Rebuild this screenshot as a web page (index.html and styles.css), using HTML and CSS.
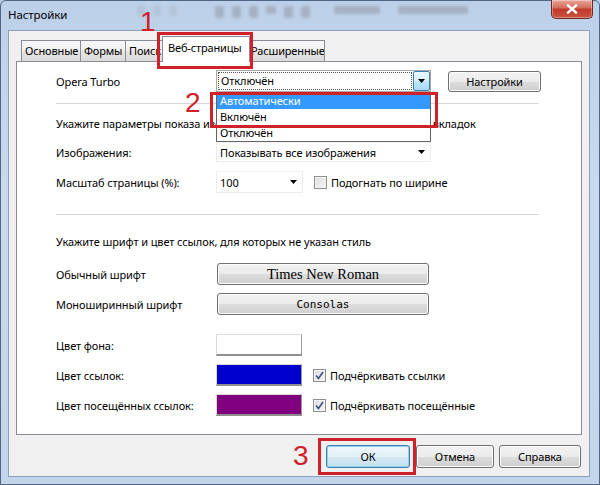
FILE: index.html
```html
<!DOCTYPE html>
<html lang="ru">
<head>
<meta charset="utf-8">
<title>Настройки</title>
<link rel="stylesheet" href="styles.css">
</head>
<body>
<div class="window">
  <div class="titlebar">
    <span class="title">Настройки</span>
    <div class="glass">
      <span class="g g1"></span><span class="g g2"></span><span class="g g3"></span><span class="g g4"></span>
      <span class="g g5"></span><span class="g g6"></span><span class="g g7"></span><span class="g g8"></span>
      <span class="g g9"></span><span class="g g10"></span><span class="g g11"></span>
    </div>
    <div class="close">
      <svg width="12" height="10" viewBox="0 0 12 10"><path d="M2 1.5 L10 8.5 M10 1.5 L2 8.5" stroke="#fff" stroke-width="2.4" stroke-linecap="square"/></svg>
    </div>
  </div>
  <div class="frame">
    <div class="client">
      <div class="tabs">
        <div class="tab t1">Основные</div>
        <div class="tab t2">Формы</div>
        <div class="tab t3">Поиск</div>
        <div class="tab sel">Веб-страницы</div>
        <div class="tab t5">Расширенные</div>
      </div>
      <div class="panel">
        <div class="row r-turbo">
          <span class="label">Opera Turbo</span>
          <div class="combo open">
            <span class="focus">Отключён</span>
            <span class="drop"><svg width="7" height="4" viewBox="0 0 7 4"><path d="M0 0 H7 L3.5 4 Z" fill="#000"/></svg></span>
            <div class="list">
              <div class="item hi">Автоматически</div>
              <div class="item">Включён</div>
              <div class="item">Отключён</div>
            </div>
          </div>
          <button class="btn b-settings">Настройки</button>
        </div>
        <div class="sep s1"></div>
        <div class="text t-images">Укажите параметры показа изображений и др. по умолчанию для всех вкладок</div>
        <div class="row r-images">
          <span class="label">Изображения:</span>
          <div class="combo flat wide"><span class="val">Показывать все изображения</span><svg class="arr" width="7" height="4" viewBox="0 0 7 4"><path d="M0 0 H7 L3.5 4 Z" fill="#000"/></svg></div>
        </div>
        <div class="row r-scale">
          <span class="label">Масштаб страницы (%):</span>
          <div class="combo flat narrow"><span class="val">100</span><svg class="arr" width="7" height="4" viewBox="0 0 7 4"><path d="M0 0 H7 L3.5 4 Z" fill="#000"/></svg></div>
          <span class="check"></span><span class="clabel">Подогнать по ширине</span>
        </div>
        <div class="sep s2"></div>
        <div class="text t-fonts">Укажите шрифт и цвет ссылок, для которых не указан стиль</div>
        <div class="row r-font">
          <span class="label">Обычный шрифт</span>
          <button class="btn fontbtn serif">Times New Roman</button>
        </div>
        <div class="row r-mono">
          <span class="label">Моноширинный шрифт</span>
          <button class="btn fontbtn mono">Consolas</button>
        </div>
        <div class="row r-bg">
          <span class="label">Цвет фона:</span>
          <span class="swatch white"></span>
        </div>
        <div class="row r-link">
          <span class="label">Цвет ссылок:</span>
          <span class="swatch blue"></span>
          <span class="check on"><svg width="9" height="9" viewBox="0 0 9 9"><path d="M1 4.5 L3.5 7.5 L8 1" fill="none" stroke="#3b4f86" stroke-width="1.6"/></svg></span><span class="clabel">Подчёркивать ссылки</span>
        </div>
        <div class="row r-visited">
          <span class="label">Цвет посещённых ссылок:</span>
          <span class="swatch purple"></span>
          <span class="check on"><svg width="9" height="9" viewBox="0 0 9 9"><path d="M1 4.5 L3.5 7.5 L8 1" fill="none" stroke="#3b4f86" stroke-width="1.6"/></svg></span><span class="clabel">Подчёркивать посещённые</span>
        </div>
      </div>
      <div class="footer">
        <button class="btn b-ok">ОК</button>
        <button class="btn b-cancel">Отмена</button>
        <button class="btn b-help">Справка</button>
      </div>
    </div>
  </div>
  <span class="num n1">1</span>
  <span class="box x1"></span>
  <span class="num n2">2</span>
  <span class="box x2"></span>
  <span class="num n3">3</span>
  <span class="box x3"></span>
</div>
</body>
</html>
```
FILE: styles.css
```css
* { box-sizing: border-box; }
html, body { margin: 0; padding: 0; }
body {
  width: 600px;
  height: 485px;
  overflow: hidden;
  font-family: "Noto Sans", "Open Sans", sans-serif;
  font-size: 11px;
  letter-spacing: -0.1px;
  color: #000;
  background: #b8cbe3;
}
.window {
  position: relative;
  width: 600px;
  height: 485px;
  display: flex;
  flex-direction: column;
  background: linear-gradient(#bcd0e9, #c9daee 40%, #c3d5ea);
  border: 1px solid #4f6684;
  border-radius: 6px 6px 0 0;
}
.titlebar {
  height: 29px;
  display: flex;
  align-items: flex-start;
  padding-left: 7px;
}
.title {
  margin-top: 6px;
  font-size: 11.5px;
  line-height: 16px;
  white-space: nowrap;
}
.glass {
  flex: 1;
  display: flex;
  align-items: flex-start;
  padding-left: 70px;
  padding-top: 3px;
  gap: 8px;
  opacity: 0.5;
  filter: blur(1.6px);
}
.g { display: block; background: #8d949e; height: 10px; margin-top: 2px; border-radius: 2px; }
.g1 { width: 8px; opacity: .4; }
.g2 { width: 8px; opacity: .4; }
.g3 { width: 8px; opacity: .4; margin-right: 30px; }
.g4 { width: 9px; height: 12px; }
.g5 { width: 9px; height: 12px; }
.g6 { width: 9px; height: 12px; }
.g7 { width: 10px; height: 8px; }
.g8 { width: 9px; height: 12px; }
.g9 { width: 9px; height: 12px; margin-right: 16px; }
.g10 { width: 46px; height: 8px; margin-right: 10px; }
.g11 { width: 70px; height: 8px; }
.close {
  width: 42px;
  height: 19px;
  margin-right: 6px;
  margin-top: -1px;
  border: 1px solid #6b2a20;
  border-top: none;
  border-radius: 0 0 5px 5px;
  background: linear-gradient(#e7a79b, #d36a59 45%, #c1392a 50%, #c9543f);
  box-shadow: inset 0 0 0 1px rgba(255,255,255,.35);
  display: flex;
  align-items: center;
  justify-content: center;
}
.frame {
  flex: 1;
  display: flex;
  padding: 0 9px 7px 7px;
}
.client {
  flex: 1;
  display: flex;
  flex-direction: column;
  background: #f0f0f0;
  border: 1px solid #8aa0bb;
}
.tabs {
  height: 25px;
  margin-top: 5px;
  padding-left: 12px;
  display: flex;
  align-items: flex-end;
}
.tab {
  height: 21px;
  line-height: 19px;
  padding-left: 3px;
  border: 1px solid #898c95;
  border-bottom: none;
  background: linear-gradient(#f7f7f7, #f0f0f0 50%, #e5e5e5 50%, #dadada);
  white-space: nowrap;
  overflow: hidden;
  font-size: 11px;
  letter-spacing: -0.15px;
}
.t1 { width: 60px; }
.t2 { width: 46px; margin-left: -1px; }
.t3 { width: 42px; margin-left: -1px; }
.sel {
  position: relative;
  z-index: 2;
  width: 88px;
  height: 26px;
  margin-left: -5px;
  margin-bottom: -1px;
  background: #fff;
  line-height: 22px;
  padding-left: 5px;
}
.t5 { width: 77px; margin-left: -2px; padding-left: 2px; }
.panel {
  height: 374px;
  margin: 0 7px 0 7px;
  background: #fff;
  border: 1px solid #898c95;
  padding: 8px 0 0 39px;
  display: flex;
  flex-direction: column;
}
.row {
  display: flex;
  align-items: center;
  height: 22px;
  position: relative;
}
.label {
  width: 160px;
  flex: none;
  white-space: nowrap;
}
.sep { height: 1px; width: 483px; background: #d7d7d7; }
.s1 { margin-top: 11px; }
.s2 { margin-top: 21px; }
.text { line-height: 16px; white-space: nowrap; }
.t-images { margin-top: 12px; }
.r-images { margin-top: 10px; height: 20px; }
.r-scale { margin-top: 9px; }
.t-fonts { margin-top: 19px; }
.r-font { margin-top: 13px; }
.r-mono { margin-top: 8px; }
.r-bg { margin-top: 19px; }
.r-link { margin-top: 8px; }
.r-visited { margin-top: 8px; }

.combo {
  position: relative;
  height: 100%;
  display: flex;
  align-items: center;
  background: #fff;
}
.combo.open {
  width: 215px;
  border: 1px solid #a6a6a6;
  padding: 1px;
  z-index: 3;
}
.focus {
  flex: 1;
  height: 100%;
  border: 1px dotted #555;
  padding-left: 2px;
  line-height: 16px;
}
.drop {
  width: 17px;
  height: 20px;
  margin: -1px -1px -1px 1px;
  border: 1px solid #3c7fb1;
  border-radius: 2px;
  background: linear-gradient(#eaf6fd, #d9f0fc 50%, #bee6fd 50%, #a7d9f5);
  display: flex;
  align-items: center;
  justify-content: center;
}
.list {
  position: absolute;
  left: -1px;
  top: 21px;
  width: 215px;
  height: 50px;
  background: #fff;
  border: 1px solid #646464;
  z-index: 4;
}
.item {
  height: 16px;
  line-height: 16px;
  padding-left: 3px;
}
.item.hi { background: #3399ff; color: #fff; }
.flat {
  border: 1px solid #ececec;
  border-top-color: #f4f4f4;
  padding-left: 3px;
}
.flat .val { flex: 1; white-space: nowrap; }
.flat .arr { margin-right: 5px; }
.wide { width: 215px; }
.narrow { width: 87px; }

.btn {
  font-family: "Noto Sans", "Open Sans", sans-serif;
  font-size: 11px;
  letter-spacing: -0.1px;
  color: #000;
  height: 22px;
  padding: 0;
  border: 1px solid #707070;
  border-radius: 3px;
  background: linear-gradient(#f2f2f2, #ebebeb 50%, #dddddd 50%, #cfcfcf);
  box-shadow: inset 0 0 0 1px #fbfbfb;
}
.b-settings { width: 93px; margin-left: 17px; height: 21px; }
.fontbtn { width: 212px; margin-left: 1px; }
.serif { font-family: "Liberation Serif", "Times New Roman", serif; font-size: 14.5px; letter-spacing: 0; }
.mono { font-family: "DejaVu Sans Mono", "Liberation Mono", monospace; font-size: 11px; letter-spacing: 0; }

.swatch {
  width: 86px;
  height: 22px;
  border: 1px solid #dcdcdc;
  border-right-color: #9a9a9a;
  border-bottom: 2px solid #8f8f8f;
}
.white { background: #fff; }
.blue { background: #0000cc; }
.purple { background: #800080; }
.check {
  width: 13px;
  height: 13px;
  flex: none;
  margin-left: 11px;
  border: 1px solid #8e8f8f;
  background: linear-gradient(135deg, #dcdcdc, #f6f6f6);
  box-shadow: inset 0 0 0 1px #f4f4f4;
  display: flex;
  align-items: center;
  justify-content: center;
}
.clabel { margin-left: 4px; white-space: nowrap; }

.footer {
  display: flex;
  justify-content: flex-end;
  margin-top: 10px;
  padding-right: 8px;
}
.footer .btn { height: 23px; }
.b-ok {
  width: 84px;
  border-color: #3c7fb1;
  background: linear-gradient(#eef7fc, #e4f1f9 50%, #d5e8f4 50%, #c8e0f0);
  box-shadow: inset 0 0 0 1px #8fd2f0;
}
.b-cancel { width: 78px; margin-left: 6px; }
.b-help { width: 82px; margin-left: 5px; }

.num {
  position: absolute;
  font-family: "Liberation Sans", Arial, sans-serif;
  font-size: 28px;
  line-height: 28px;
  letter-spacing: 0;
  color: #d0202a;
  z-index: 10;
}
.n1 { left: 139px; top: 7px; }
.n2 { left: 184px; top: 88px; }
.n3 { left: 292px; top: 441px; }
.box {
  position: absolute;
  border: 3px solid #d0202a;
  z-index: 10;
}
.x1 { left: 156px; top: 31px; width: 96px; height: 37px; }
.x2 { left: 209px; top: 91px; width: 228px; height: 36px; }
.x3 { left: 317px; top: 437px; width: 98px; height: 37px; }
```
